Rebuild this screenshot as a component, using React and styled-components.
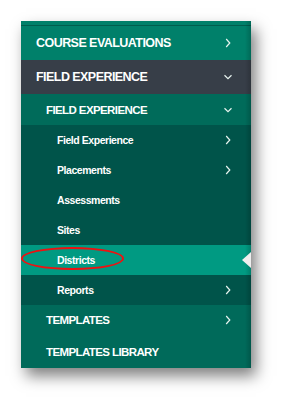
import React from "react";
import styled, { createGlobalStyle } from "styled-components";

const GlobalStyle = createGlobalStyle`
  html, body {
    margin: 0;
    padding: 0;
    background: #ffffff;
    font-family: "Liberation Sans", Arial, sans-serif;
  }
`;

const Page = styled.div`
  width: 293px;
  height: 411px;
  padding: 21px 0 0 21px;
  box-sizing: border-box;
`;

const Panel = styled.nav`
  width: 230px;
  display: flex;
  flex-direction: column;
  background: #006a5a;
  box-shadow: 5px 8px 14px rgba(0, 0, 0, 0.5);
  position: relative;

  &::after {
    content: "";
    position: absolute;
    top: 0;
    right: 0;
    bottom: 0;
    width: 6px;
    background: linear-gradient(to right, rgba(0, 0, 0, 0), rgba(0, 0, 0, 0.18));
    pointer-events: none;
  }
`;

const TopStrip = styled.div`
  height: 4px;
  background: #00806a;
  border-bottom: 1px solid #005e4e;
`;

const Row = styled.div`
  height: ${(p) => p.$h}px;
  display: flex;
  align-items: center;
  justify-content: space-between;
  padding: 0 18px 0 ${(p) => p.$indent}px;
  background: ${(p) => p.$bg};
  color: #ffffff;
  font-weight: bold;
  font-size: ${(p) => p.$size}px;
  letter-spacing: ${(p) => p.$ls}px;
  white-space: nowrap;
  position: relative;
`;

const Label = styled.span`
  position: relative;
`;

const Circle = styled.span`
  position: absolute;
  left: -36px;
  top: -7px;
  width: 99px;
  height: 19px;
  border: 2.5px solid #ee1111;
  border-radius: 50%;
`;

const Pointer = styled.span`
  position: absolute;
  right: 0;
  top: 7px;
  width: 0;
  height: 0;
  border-top: 8px solid transparent;
  border-bottom: 8px solid transparent;
  border-right: 9px solid #eeeeee;
  z-index: 2;
`;

const Chevron = ({ down }) => (
  <svg width="10" height="10" viewBox="0 0 10 10">
    {down ? (
      <path d="M1.5 3.2 L5 6.6 L8.5 3.2" fill="none" stroke="#e8f4f0" strokeWidth="1.2" />
    ) : (
      <path d="M3.2 1 L6.8 5 L3.2 9" fill="none" stroke="#e8f4f0" strokeWidth="1.2" />
    )}
  </svg>
);

const top = { $size: 12.5, $ls: -0.55, $indent: 15 };
const sub = { $size: 11.5, $ls: -0.6, $indent: 25 };
const item = { $size: 10.5, $ls: -0.45, $indent: 36, $h: 30, $bg: "#00544a" };

const App = () => (
  <>
    <GlobalStyle />
    <Page>
      <Panel>
        <TopStrip />
        <Row {...top} $h={34} $bg="#00806a">
          <Label>COURSE EVALUATIONS</Label>
          <Chevron />
        </Row>
        <Row {...top} $h={34} $bg="#373e48">
          <Label>FIELD EXPERIENCE</Label>
          <Chevron down />
        </Row>
        <Row {...sub} $h={31} $bg="#006b5a">
          <Label>FIELD EXPERIENCE</Label>
          <Chevron down />
        </Row>
        <Row {...item}>
          <Label>Field Experience</Label>
          <Chevron />
        </Row>
        <Row {...item}>
          <Label>Placements</Label>
          <Chevron />
        </Row>
        <Row {...item}>
          <Label>Assessments</Label>
        </Row>
        <Row {...item}>
          <Label>Sites</Label>
        </Row>
        <Row {...item} $bg="#009a82">
          <Label>
            Districts
            <Circle />
          </Label>
          <Pointer />
        </Row>
        <Row {...item}>
          <Label>Reports</Label>
          <Chevron />
        </Row>
        <Row {...sub} $h={30} $bg="#006a5a">
          <Label>TEMPLATES</Label>
          <Chevron />
        </Row>
        <Row {...sub} $h={33} $bg="#006a5a">
          <Label>TEMPLATES LIBRARY</Label>
        </Row>
      </Panel>
    </Page>
  </>
);

export default App;
